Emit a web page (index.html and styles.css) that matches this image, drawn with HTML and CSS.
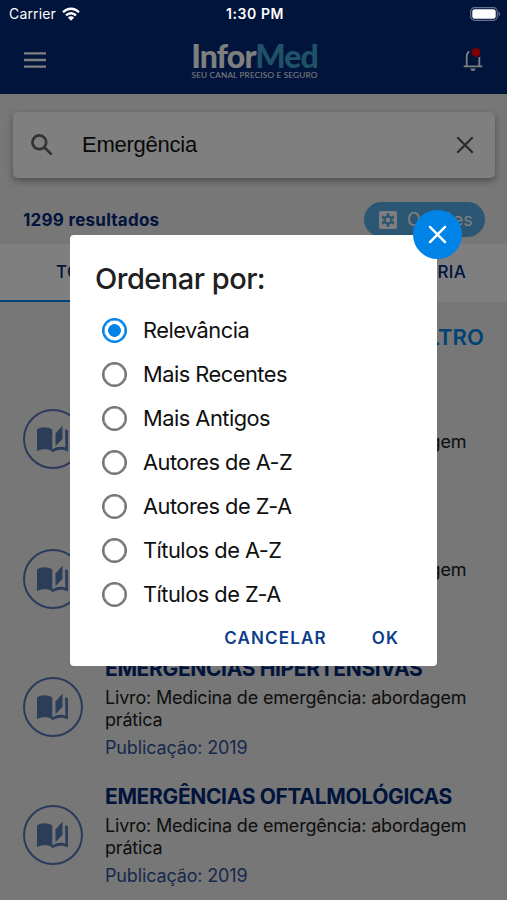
FILE: index.html
```html
<!DOCTYPE html>
<html lang="pt-BR">

<head>
    <meta charset="UTF-8">
    <meta name="viewport" content="width=device-width, initial-scale=1.0">
    <title>InforMed</title>
    <link rel="stylesheet" href="styles.css">
</head>

<body>
    <svg class="sprite">
        <symbol id="book" viewBox="0 0 32 28">
            <path d="M0 4.6C4 1.6 11 1.4 15.3 4.6V26.2C11 23.6 4 23.8 0 26.2Z" />
            <path d="M18.5 8.5 25.5 .5V14L18.5 21Z" />
            <path d="M28 4.2C29.3 4.6 30.3 5 31 5.6V26.4C26 23.8 20 24 15.3 27.4L14 25.4C19 21.4 24 21.3 28.4 22.6Z" />
        </symbol>
    </svg>

    <div class="app">
        <header class="header">
            <div class="toolbar">
                <svg class="menu" viewBox="0 0 22 16"><path d="M0 1.4h22M0 8h22M0 14.6h22" /></svg>
                <div class="logo">
                    <div class="logo-name">Infor<span>Med</span></div>
                    <div class="logo-sub">SEU CANAL PRECISO E SEGURO</div>
                </div>
                <svg class="bell" viewBox="0 0 20 26">
                    <path d="M6.2 4.4C4.4 5.6 3.7 7.4 3.7 9.5V19M16.3 10V19M.7 19.4h18.6" />
                    <path class="clapper" d="M7.3 21.6h5.4c-.4 1.7-1.3 2.5-2.7 2.5s-2.3-.8-2.7-2.5z" />
                    <circle cx="13" cy="5.4" r="4.5" />
                </svg>
            </div>
        </header>

        <div class="search">
            <svg class="lupa" viewBox="0 0 22 22"><circle cx="8.3" cy="8.3" r="6.9" /><path d="M13.3 13.3l7.3 7.3" /></svg>
            <div class="search-text">Emergência</div>
            <svg class="clear" viewBox="0 0 18 18"><path d="M1.3 1.3l15.4 15.4M16.7 1.3L1.3 16.7" /></svg>
        </div>

        <div class="summary">
            <div class="count">1299 resultados</div>
            <div class="options">
                <svg class="gear" viewBox="0 0 18 18">
                    <rect width="18" height="18" rx="2" />
                    <path class="teeth" d="M9 2.2v13.6M3.1 5.6l11.8 6.8M3.1 12.4l11.8-6.8" />
                    <circle class="ring" cx="9" cy="9" r="4.6" />
                    <circle cx="9" cy="9" r="2.3" />
                </svg>
                <span>Opções</span>
            </div>
        </div>

        <div class="tabs">
            <div class="tab active">TODOS</div>
            <div class="tab">CATEGORIA</div>
        </div>

        <div class="filter">FILTRO</div>

        <div class="results">
            <div class="item">
                <div class="icon"><svg><use href="#book" /></svg></div>
                <div class="info">
                    <div class="name">EMERGÊNCIAS<br>CARDIOLÓGICAS</div>
                    <div class="source">Livro: Medicina de emergência: abordagem prática</div>
                    <div class="year">Publicação: 2019</div>
                </div>
            </div>
            <div class="item">
                <div class="icon"><svg><use href="#book" /></svg></div>
                <div class="info">
                    <div class="name">EMERGÊNCIAS</div>
                    <div class="source">Livro: Medicina de emergência: abordagem prática</div>
                    <div class="year">Publicação: 2019</div>
                </div>
            </div>
            <div class="item">
                <div class="icon"><svg><use href="#book" /></svg></div>
                <div class="info">
                    <div class="name">EMERGÊNCIAS HIPERTENSIVAS</div>
                    <div class="source">Livro: Medicina de emergência: abordagem prática</div>
                    <div class="year">Publicação: 2019</div>
                </div>
            </div>
            <div class="item">
                <div class="icon"><svg><use href="#book" /></svg></div>
                <div class="info">
                    <div class="name">EMERGÊNCIAS OFTALMOLÓGICAS</div>
                    <div class="source">Livro: Medicina de emergência: abordagem prática</div>
                    <div class="year">Publicação: 2019</div>
                </div>
            </div>
        </div>
    </div>

    <div class="overlay">
        <div class="statusbar">
            <div class="carrier">
                <span>Carrier</span>
                <svg class="wifi" viewBox="0 0 18 14">
                    <path d="M1 5.2C5.6.6 12.4.6 17 5.2M4 8.4c2.9-2.9 7.1-2.9 10 0" />
                    <path class="dot" d="M5.9 10.5c1.8-1.6 4.4-1.6 6.2 0L9 13.7z" />
                </svg>
            </div>
            <div class="time">1:30 PM</div>
            <svg class="battery" viewBox="0 0 31 14">
                <rect class="shell" x=".7" y=".7" width="26.6" height="12.6" rx="3.8" />
                <rect class="level" x="2.3" y="2.3" width="23.4" height="9.4" rx="2.3" />
                <path class="tip" d="M28.6 4.6c2 .9 2 3.9 0 4.8z" />
            </svg>
        </div>

        <div class="dialog">
            <div class="close"><svg viewBox="0 0 18 18"><path d="M1 1l16 16M17 1L1 17" /></svg></div>
            <div class="title">Ordenar por:</div>
            <div class="choice"><span class="radio checked"></span>Relevância</div>
            <div class="choice"><span class="radio"></span>Mais Recentes</div>
            <div class="choice"><span class="radio"></span>Mais Antigos</div>
            <div class="choice"><span class="radio"></span>Autores de A-Z</div>
            <div class="choice"><span class="radio"></span>Autores de Z-A</div>
            <div class="choice"><span class="radio"></span>Títulos de A-Z</div>
            <div class="choice"><span class="radio"></span>Títulos de Z-A</div>
            <div class="actions">
                <div class="cancel">CANCELAR</div>
                <div class="ok">OK</div>
            </div>
        </div>
    </div>
</body>

</html>
```
FILE: styles.css
```css
* {
    box-sizing: border-box;
}

body {
    margin: 0;
    height: 900px;
    position: relative;
    overflow: hidden;
    font-family: Inter, "Liberation Sans", sans-serif;
    color: #202020;
}

svg {
    display: block;
    fill: none;
}

.sprite {
    position: absolute;
    width: 0;
    height: 0;
}

.app {
    height: 900px;
    overflow: hidden;
    background-color: #eeeeee;
}

.header {
    height: 94px;
    padding-top: 27px;
    background-color: #002878;
}

.toolbar {
    height: 65px;
    display: flex;
    justify-content: space-between;
    align-items: center;
    padding: 0 24px;
}

.menu {
    width: 22px;
    height: 16px;
    stroke: #ffffff;
    stroke-width: 2.4;
}

.logo {
    width: 140px;
    text-align: center;
    font-family: Lato, sans-serif;
    color: #ffffff;
    white-space: nowrap;
}

.logo-name {
    font-size: 32px;
    line-height: 31px;
    font-weight: 900;
    letter-spacing: -0.95px;
}

.logo-name span {
    color: #3fa3cf;
}

.logo-sub {
    font-size: 8.2px;
    line-height: 9px;
    letter-spacing: 0.18px;
}

.bell {
    width: 20px;
    height: 26px;
    stroke: #ffffff;
    stroke-width: 1.8;
}

.bell circle {
    fill: #ff0000;
    stroke: none;
}

.bell .clapper {
    fill: #ffffff;
    stroke: none;
}

.search {
    height: 66px;
    margin: 18px 12px 0 13px;
    padding: 0 21px 0 18px;
    display: flex;
    align-items: center;
    background-color: #ffffff;
    border-radius: 5px;
    box-shadow: 0 3px 7px rgba(0, 0, 0, 0.35);
}

.lupa {
    width: 22px;
    height: 22px;
    stroke: #666666;
    stroke-width: 2.7;
}

.search-text {
    flex: 1;
    margin-left: 29px;
    font-family: "Liberation Sans", sans-serif;
    font-size: 22px;
    letter-spacing: -0.25px;
    color: #111111;
}

.clear {
    width: 18px;
    height: 18px;
    stroke: #555555;
    stroke-width: 2.2;
}

.summary {
    height: 66px;
    padding: 24px 22px 0 23px;
    display: flex;
    justify-content: space-between;
    align-items: flex-start;
}

.count {
    line-height: 36px;
    font-size: 17px;
    font-weight: 700;
    letter-spacing: 0.25px;
    color: #002878;
}

.options {
    width: 121px;
    height: 35px;
    padding-left: 15px;
    display: flex;
    align-items: center;
    gap: 10px;
    border-radius: 18px;
    background-color: #58aee8;
    color: #ffffff;
    font-size: 18px;
}

.gear {
    width: 18px;
    height: 18px;
    fill: #ffffff;
}

.gear .teeth {
    stroke: #58aee8;
    stroke-width: 2.8;
}

.gear .ring {
    fill: #58aee8;
}

.tabs {
    height: 58px;
    display: flex;
    background-color: #ffffff;
}

.tab {
    flex: 1;
    border-bottom: 2px solid transparent;
    line-height: 57px;
    padding-right: 41px;
    text-align: right;
    font-size: 17px;
    font-weight: 500;
    letter-spacing: 0.3px;
    color: #002878;
}

.tab.active {
    padding: 0 0 0 56px;
    text-align: left;
    border-color: #0086e8;
}

.filter {
    height: 61px;
    padding: 21px 23px 0 0;
    line-height: 28px;
    text-align: right;
    font-size: 22px;
    font-weight: 600;
    letter-spacing: 0.1px;
    color: #0086e8;
}

.item {
    display: flex;
    align-items: center;
    padding: 13px 0 12px 23px;
    border-bottom: 1px solid #ececec;
}

.icon {
    width: 60px;
    height: 60px;
    margin-right: 22px;
    display: flex;
    justify-content: center;
    align-items: center;
    border: 2px solid #5474b4;
    border-radius: 50%;
}

.icon svg {
    width: 32px;
    height: 28px;
    fill: #587ab4;
}

.info {
    width: 380px;
}

.name {
    padding-top: 1px;
    font-size: 21px;
    line-height: 24px;
    font-weight: 700;
    letter-spacing: -0.35px;
    color: #002878;
}

.source {
    margin-top: 6px;
    font-size: 18px;
    line-height: 22px;
    letter-spacing: -0.18px;
}

.year {
    margin-top: 7px;
    font-size: 18px;
    line-height: 20px;
    letter-spacing: -0.15px;
    color: #30529a;
}

.overlay {
    position: absolute;
    top: 0;
    left: 0;
    width: 507px;
    height: 900px;
    background-color: rgba(0, 0, 0, 0.5);
}

.statusbar {
    height: 27px;
    padding: 0 6px 0 9px;
    display: grid;
    grid-template-columns: 1fr auto 1fr;
    align-items: center;
    color: #ffffff;
    font-size: 14px;
}

.carrier {
    display: flex;
    align-items: center;
    gap: 6px;
    letter-spacing: 0.15px;
}

.wifi {
    width: 18px;
    height: 14px;
    stroke: #ffffff;
    stroke-width: 2.3;
}

.wifi .dot {
    fill: #ffffff;
    stroke: none;
}

.time {
    font-weight: 600;
    letter-spacing: 0.6px;
}

.battery {
    width: 31px;
    height: 14px;
    justify-self: end;
}

.shell {
    stroke: #66728c;
    stroke-width: 1.2;
}

.level {
    fill: #ffffff;
}

.tip {
    fill: #66728c;
}

.dialog {
    position: relative;
    width: 367px;
    height: 431px;
    margin: 208px 0 0 70px;
    padding: 24px 25px 0;
    background-color: #ffffff;
    border-radius: 4px;
}

.close {
    position: absolute;
    top: -25px;
    right: -25px;
    width: 49px;
    height: 49px;
    display: flex;
    justify-content: center;
    align-items: center;
    border-radius: 50%;
    background-color: #0083e6;
}

.close svg {
    width: 17px;
    height: 17px;
    overflow: visible;
    stroke: #ffffff;
    stroke-width: 2.6;
    stroke-linecap: round;
}

.title {
    height: 49px;
    line-height: 39px;
    font-size: 29px;
    font-weight: 500;
    letter-spacing: -0.5px;
}

.choice {
    height: 44px;
    padding-left: 7px;
    display: flex;
    align-items: center;
    gap: 16px;
    font-size: 21.8px;
    letter-spacing: -0.5px;
    color: #101010;
}

.radio {
    width: 25px;
    height: 25px;
    border: 2px solid #757575;
    border-radius: 50%;
    box-shadow: inset 0 0 0 0.6px #757575;
}

.radio.checked {
    border-color: #0083e6;
    box-shadow: inset 0 0 0 0.6px #0083e6;
    background: radial-gradient(circle, #0083e6 6px, transparent 6.7px);
}

.actions {
    display: flex;
    justify-content: flex-end;
    gap: 45px;
    padding: 11px 13px 0 0;
    line-height: 22px;
    font-size: 17px;
    font-weight: 600;
    letter-spacing: 1.15px;
    color: #0d3c8c;
}
```
